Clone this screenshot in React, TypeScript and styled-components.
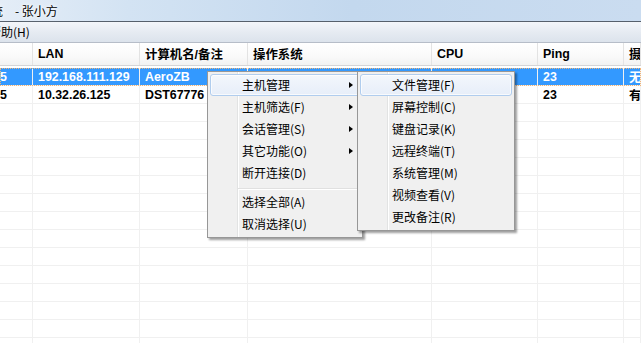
import React from "react";
import styled, { createGlobalStyle } from "styled-components";

const GlobalStyle = createGlobalStyle`
  html, body {
    margin: 0;
    padding: 0;
    background: #ffffff;
    overflow: hidden;
  }
`;

const Window = styled.div`
  position: relative;
  width: 641px;
  height: 343px;
  overflow: hidden;
  background: #ffffff;
  font-family: "Noto Sans CJK SC", sans-serif;
`;

const TitleBar = styled.div`
  height: 21px;
  display: flex;
  align-items: center;
  background: linear-gradient(to right, #e4edf7 0%, #d3e3f3 20%, #c3d8ee 55%, #cadcf0 100%);
  font-size: 12px;
  color: #000;
  white-space: nowrap;
`;

const TitlePart = styled.span<{ $shift: number }>`
  margin-left: ${(p) => p.$shift}px;
  line-height: 21px;
  text-shadow: 0 0 6px #ffffff, 0 0 3px #ffffff;
`;

const MenuBar = styled.div`
  height: 20px;
  border-top: 1px solid #56606c;
  border-bottom: 1px solid #b6bdc8;
  background: linear-gradient(to bottom, #f3f6fa 0%, #e6ebf2 50%, #dce3ec 100%);
  display: flex;
  align-items: center;
  font-size: 12px;
  color: #000;
`;

const MenuBarItem = styled.span`
  margin-left: -11px;
  line-height: 20px;
`;

const COLS = "33px 107px 108px 184px 106px 86px 1fr";

const HeaderRow = styled.div`
  display: grid;
  grid-template-columns: ${COLS};
  height: 23px;
  box-sizing: border-box;
  border-bottom: 1px solid #d5d5d5;
  background: linear-gradient(to bottom, #ffffff 0%, #fafafa 60%, #f2f2f2 100%);
`;

const HeaderCell = styled.div`
  display: flex;
  align-items: center;
  padding-left: 5px;
  border-right: 1px solid #e3e3e3;
  font-family: "Liberation Sans", "Noto Sans CJK SC", sans-serif;
  font-weight: 700;
  font-size: 12.4px;
  color: #000;
  white-space: nowrap;
  overflow: hidden;
`;

const Body = styled.div`
  padding-top: 2px;
`;

const Row = styled.div<{ $selected?: boolean }>`
  display: grid;
  grid-template-columns: ${COLS};
  height: 18px;
  box-sizing: border-box;
  border-bottom: 1px solid #f0f0f0;
  background: ${(p) => (p.$selected ? "#3399ff" : "#ffffff")};
  color: ${(p) => (p.$selected ? "#ffffff" : "#000000")};
  outline: ${(p) => (p.$selected ? "1px dotted #f3b577" : "none")};
  outline-offset: -1px;
`;

const Cell = styled.div<{ $first?: boolean }>`
  display: flex;
  align-items: center;
  padding-left: ${(p) => (p.$first ? "0" : "5px")};
  border-right: 1px solid #f0f0f0;
  font-family: "Liberation Sans", "Noto Sans CJK SC", sans-serif;
  font-weight: 700;
  font-size: 12.4px;
  white-space: nowrap;
  overflow: hidden;
`;

const PopupMenu = styled.div<{ $left: number; $top: number; $width: number }>`
  position: absolute;
  left: ${(p) => p.$left}px;
  top: ${(p) => p.$top}px;
  width: ${(p) => p.$width}px;
  box-sizing: border-box;
  padding: 2px;
  border: 1px solid #979797;
  background: linear-gradient(
    to right,
    #f0f0f0 0 29px,
    #e2e3e3 29px 30px,
    #ffffff 30px 31px,
    #f0f0f0 31px
  );
  box-shadow: 2px 2px 2px rgba(0, 0, 0, 0.38);
  font-size: 12px;
  color: #000;
`;

const MenuItem = styled.div<{ $active?: boolean }>`
  height: 22px;
  box-sizing: border-box;
  display: flex;
  align-items: center;
  padding-left: 31px;
  border: 1px solid ${(p) => (p.$active ? "#b0cdee" : "transparent")};
  border-radius: 3px;
  background: ${(p) =>
    p.$active ? "linear-gradient(to bottom, #f3f7fc 0%, #e7eef9 100%)" : "transparent"};
  box-shadow: ${(p) => (p.$active ? "inset 0 0 0 1px rgba(255,255,255,0.7)" : "none")};
  white-space: nowrap;
  line-height: 20px;
`;

const Arrow = styled.span`
  margin-left: auto;
  margin-right: 6px;
  width: 0;
  height: 0;
  border-top: 3.5px solid transparent;
  border-bottom: 3.5px solid transparent;
  border-left: 4px solid #000;
`;

const Separator = styled.div`
  margin: 4px 0 1px 28px;
  height: 2px;
  box-sizing: border-box;
  border-top: 1px solid #e0e0e0;
  border-bottom: 1px solid #ffffff;
`;

const headers = ["", "LAN", "计算机名/备注", "操作系统", "CPU", "Ping", "摄"];

const rows: string[][] = [
  ["5", "192.168.111.129", "AeroZB", "", "", "23", "无"],
  ["5", "10.32.26.125", "DST67776", "", "", "23", "有"],
];
while (rows.length < 16) rows.push(["", "", "", "", "", "", ""]);

type Entry = { label: string; sub?: boolean; sep?: boolean };

const mainMenu: Entry[] = [
  { label: "主机管理", sub: true },
  { label: "主机筛选(F)", sub: true },
  { label: "会话管理(S)", sub: true },
  { label: "其它功能(O)", sub: true },
  { label: "断开连接(D)" },
  { label: "", sep: true },
  { label: "选择全部(A)" },
  { label: "取消选择(U)" },
];

const subMenu: Entry[] = [
  { label: "文件管理(F)" },
  { label: "屏幕控制(C)" },
  { label: "键盘记录(K)" },
  { label: "远程终端(T)" },
  { label: "系统管理(M)" },
  { label: "视频查看(V)" },
  { label: "更改备注(R)" },
];

const renderMenu = (items: Entry[]) =>
  items.map((it, i) =>
    it.sep ? (
      <Separator key={i} />
    ) : (
      <MenuItem key={i} $active={i === 0}>
        {it.label}
        {it.sub && <Arrow />}
      </MenuItem>
    )
  );

const App: React.FC = () => {
  return (
    <Window>
      <GlobalStyle />
      <TitleBar>
        <TitlePart $shift={-9}>统</TitlePart>
        <TitlePart $shift={12}>- 张小方</TitlePart>
      </TitleBar>
      <MenuBar>
        <MenuBarItem>帮助(H)</MenuBarItem>
      </MenuBar>
      <HeaderRow>
        {headers.map((h, i) => (
          <HeaderCell key={i}>{h}</HeaderCell>
        ))}
      </HeaderRow>
      <Body>
        {rows.map((r, ri) => (
          <Row key={ri} $selected={ri === 0}>
            {r.map((c, ci) => (
              <Cell key={ci} $first={ci === 0}>
                {c}
              </Cell>
            ))}
          </Row>
        ))}
      </Body>
      <PopupMenu $left={207} $top={71} $width={156}>
        {renderMenu(mainMenu)}
      </PopupMenu>
      <PopupMenu $left={357} $top={71} $width={158}>
        {renderMenu(subMenu)}
      </PopupMenu>
    </Window>
  );
};

export default App;
